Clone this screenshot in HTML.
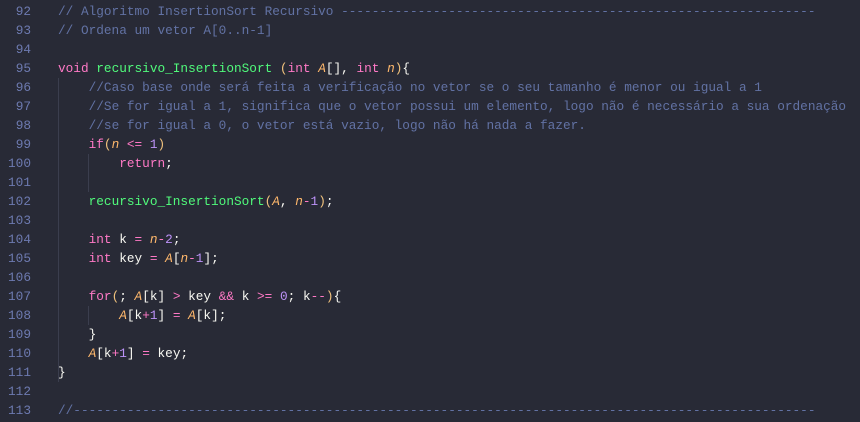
<!DOCTYPE html>
<html><head><meta charset="utf-8"><style>
html,body{margin:0;padding:0;background:#282a36;width:860px;height:422px;overflow:hidden}
.c{position:absolute;left:0;top:2px;font-family:"Liberation Mono",monospace;font-size:12.75px;line-height:19px;color:#f8f8f2}
.l{height:19px;position:relative;white-space:pre}
.n{display:inline-block;width:31px;text-align:right;color:#6d7ab0;margin-right:27px}
.cm{color:#6272a4}.k{color:#ff79c6}.f{color:#50fa7b}.p{color:#ffb86c;font-style:italic}.d{color:#bd93f9}.o{color:#ff79c6}.b{color:#f1c27d}
.g{position:absolute;width:1px;background:#3b3e4e}
</style></head><body>
<div class="g" style="left:58px;top:78px;height:304px"></div>
<div class="g" style="left:88px;top:154px;height:38px"></div>
<div class="g" style="left:88px;top:306px;height:19px"></div>
<div class="c"><div class="l"><span class="n">92</span><span class="cm">// Algoritmo InsertionSort Recursivo --------------------------------------------------------------</span></div><div class="l"><span class="n">93</span><span class="cm">// Ordena um vetor A[0..n-1]</span></div><div class="l"><span class="n">94</span></div><div class="l"><span class="n">95</span><span class="k">void</span> <span class="f">recursivo_InsertionSort</span> <span class="b">(</span><span class="k">int</span> <span class="p">A</span>[], <span class="k">int</span> <span class="p">n</span><span class="b">)</span>{</div><div class="l"><span class="n">96</span>    <span class="cm">//Caso base onde será feita a verificação no vetor se o seu tamanho é menor ou igual a 1</span></div><div class="l"><span class="n">97</span>    <span class="cm">//Se for igual a 1, significa que o vetor possui um elemento, logo não é necessário a sua ordenação</span></div><div class="l"><span class="n">98</span>    <span class="cm">//se for igual a 0, o vetor está vazio, logo não há nada a fazer.</span></div><div class="l"><span class="n">99</span>    <span class="k">if</span><span class="b">(</span><span class="p">n</span> <span class="o">&lt;=</span> <span class="d">1</span><span class="b">)</span></div><div class="l"><span class="n">100</span>        <span class="k">return</span>;</div><div class="l"><span class="n">101</span></div><div class="l"><span class="n">102</span>    <span class="f">recursivo_InsertionSort</span><span class="b">(</span><span class="p">A</span>, <span class="p">n</span><span class="o">-</span><span class="d">1</span><span class="b">)</span>;</div><div class="l"><span class="n">103</span></div><div class="l"><span class="n">104</span>    <span class="k">int</span> k <span class="o">=</span> <span class="p">n</span><span class="o">-</span><span class="d">2</span>;</div><div class="l"><span class="n">105</span>    <span class="k">int</span> key <span class="o">=</span> <span class="p">A</span>[<span class="p">n</span><span class="o">-</span><span class="d">1</span>];</div><div class="l"><span class="n">106</span></div><div class="l"><span class="n">107</span>    <span class="k">for</span><span class="b">(</span>; <span class="p">A</span>[k] <span class="o">&gt;</span> key <span class="o">&amp;&amp;</span> k <span class="o">&gt;=</span> <span class="d">0</span>; k<span class="o">--</span><span class="b">)</span>{</div><div class="l"><span class="n">108</span>        <span class="p">A</span>[k<span class="o">+</span><span class="d">1</span>] <span class="o">=</span> <span class="p">A</span>[k];</div><div class="l"><span class="n">109</span>    }</div><div class="l"><span class="n">110</span>    <span class="p">A</span>[k<span class="o">+</span><span class="d">1</span>] <span class="o">=</span> key;</div><div class="l"><span class="n">111</span>}</div><div class="l"><span class="n">112</span></div><div class="l"><span class="n">113</span><span class="cm">//-------------------------------------------------------------------------------------------------</span></div></div>
</body></html>
